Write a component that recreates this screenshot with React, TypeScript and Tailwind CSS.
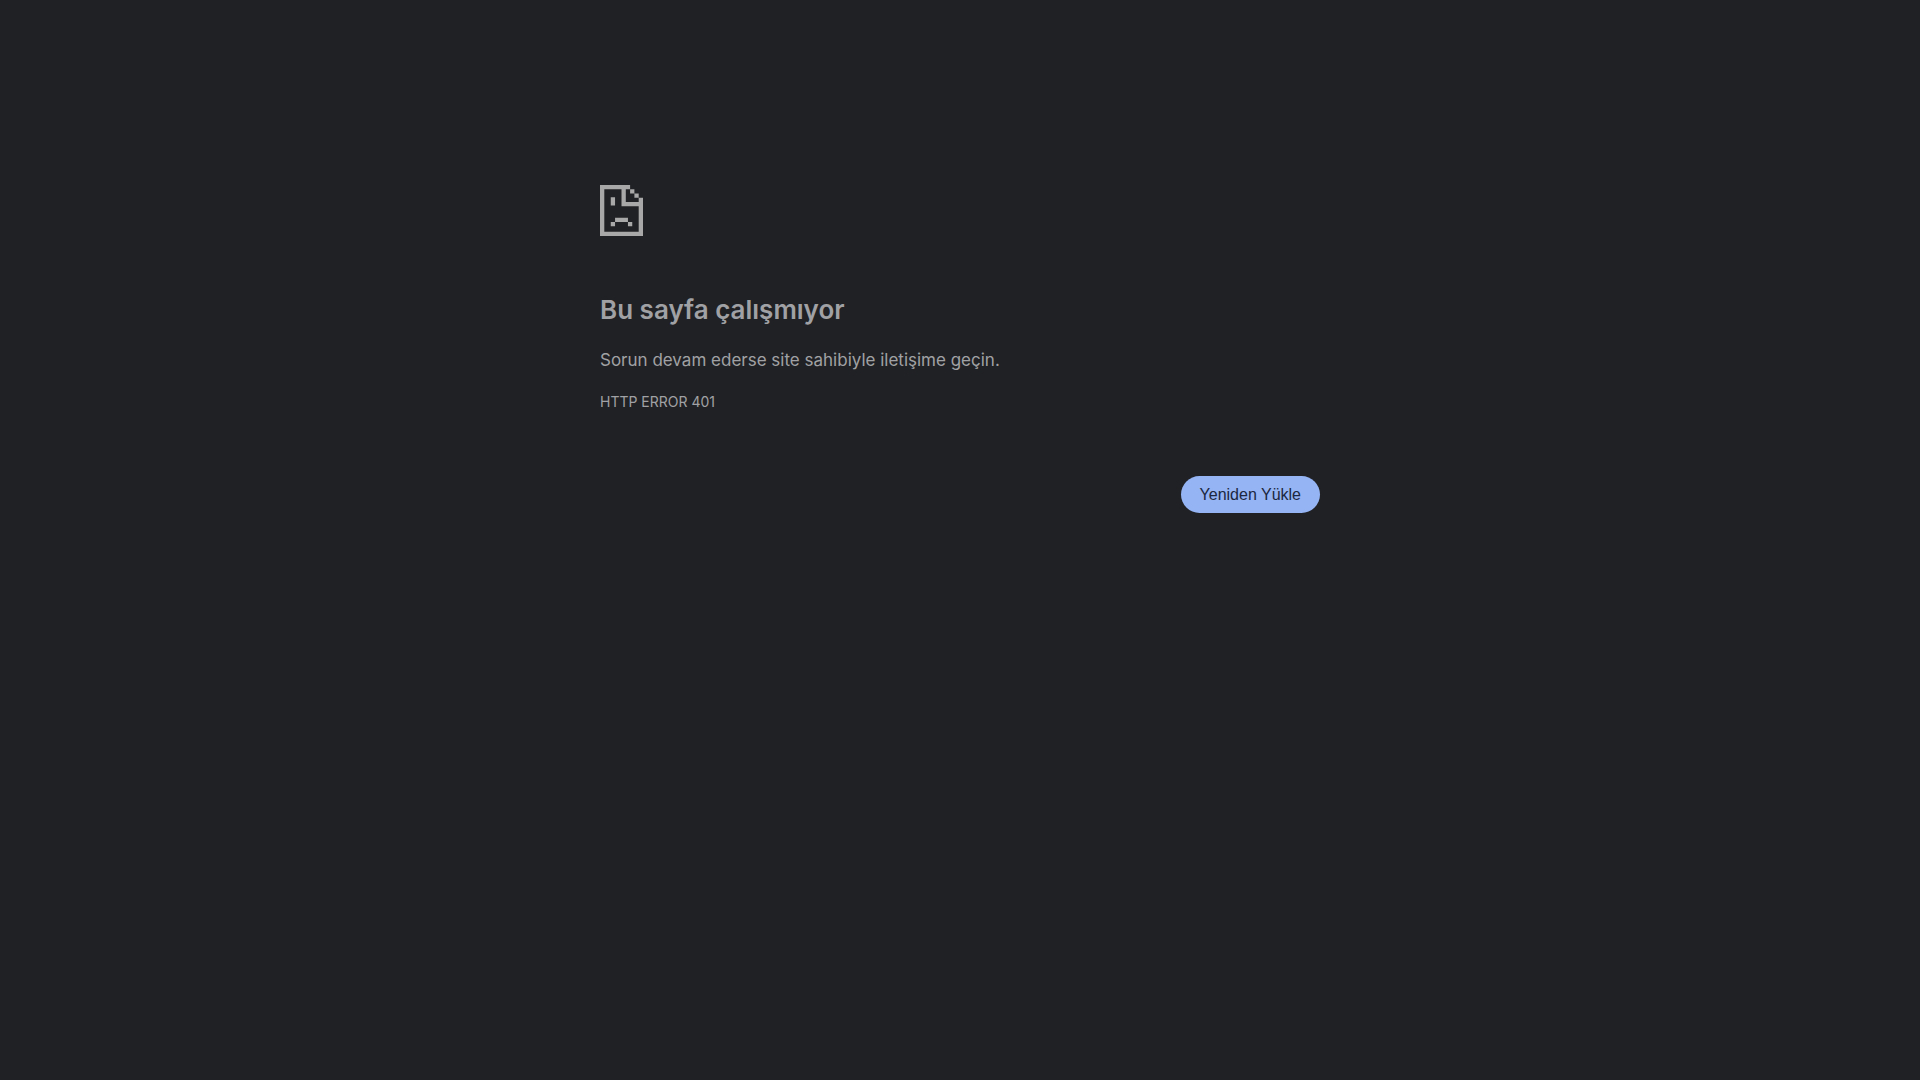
function SadPageIcon() {
  return (
    <svg
      className="h-[51px] w-[43px]"
      viewBox="0 0 10 12"
      preserveAspectRatio="none"
      fill="#a8a8a9"
      aria-hidden="true"
    >
      <path d="M0 0H7V1H1V11H9V5H5V1H6V4H10V12H0Z" />
      <path d="M7 1H8V2H7ZM8 2H9V3H8ZM9 3H10V4H9Z" />
      <path d="M2.5 2.9H3.5V4.8H2.5ZM3.5 7.7H6.5V8.7H3.5ZM2.5 8.7H3.5V9.7H2.5ZM6.5 8.7H7.5V9.7H6.5Z" />
    </svg>
  );
}

export default function App() {
  return (
    <div className="min-h-screen bg-[#202124] font-['Inter',sans-serif] text-[#a0a1a4]">
      <main className="mx-auto max-w-[720px] pt-[185px]">
        <SadPageIcon />
        <h1 className="mt-[52px] text-[26px] leading-[44px] font-semibold">Bu sayfa çalışmıyor</h1>
        <p className="mt-[14px] text-[17px] leading-[28px]">Sorun devam ederse site sahibiyle iletişime geçin.</p>
        <p className="mt-[14px] text-sm leading-[28px]">HTTP ERROR 401</p>
        <div className="mt-[60px] flex justify-end">
          <button
            type="button"
            className="h-[37px] rounded-full bg-[#94b4f4] px-[19px] font-['Liberation_Sans',sans-serif] text-base text-[#1c2740]"
          >
            Yeniden Yükle
          </button>
        </div>
      </main>
    </div>
  );
}
